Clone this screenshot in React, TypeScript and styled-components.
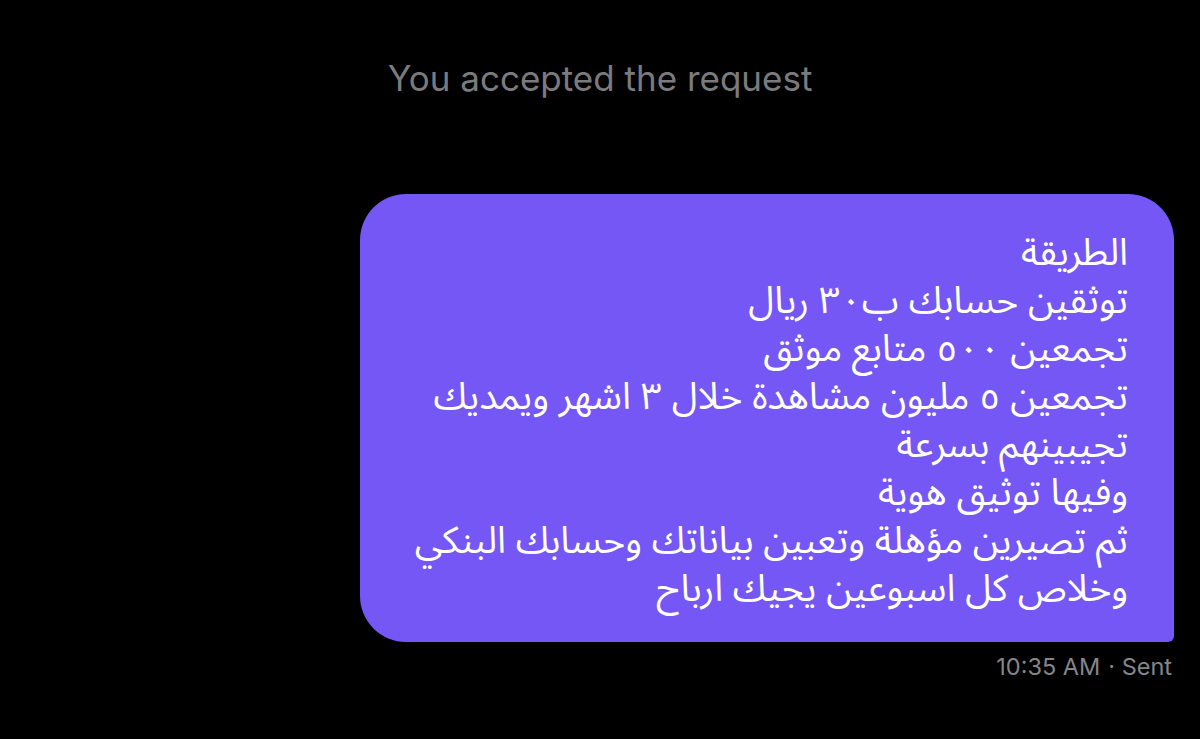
import React from "react";
import styled, { createGlobalStyle } from "styled-components";

const Global = createGlobalStyle`
  html, body { margin: 0; padding: 0; background: #000; }
  * { box-sizing: border-box; }
`;

const Page = styled.div`
  width: 1200px;
  min-height: 739px;
  background: #000;
  display: flex;
  flex-direction: column;
  padding-top: 58px;
  font-family: Inter, "Noto Sans", "Liberation Sans", sans-serif;
`;

const Notice = styled.div`
  text-align: center;
  color: #7b7b7e;
  font-size: 35px;
  line-height: 40px;
`;

const BubbleRow = styled.div`
  display: flex;
  justify-content: flex-end;
  padding-right: 26px;
  margin-top: 96px;
`;

const Bubble = styled.div`
  width: 814px;
  background: #7457f5;
  border-radius: 46px 46px 6px 46px;
  padding: 35px 46px 29px 40px;
  direction: rtl;
  text-align: right;
  color: #fff;
  font-family: "Noto Sans Arabic", "Noto Sans", "DejaVu Sans", sans-serif;
  font-size: 37.5px;
`;

const Line = styled.div`
  height: 48px;
  line-height: 48px;
  white-space: nowrap;
`;

const Meta = styled.div`
  display: flex;
  justify-content: flex-end;
  gap: 8px;
  padding-right: 28px;
  margin-top: 10px;
  color: #86868a;
  font-size: 23.5px;
  line-height: 30px;
`;

const lines = [
  "الطريقة",
  "توثقين حسابك ب٣٠ ريال",
  "تجمعين ٥٠٠ متابع موثق",
  "تجمعين ٥ مليون مشاهدة خلال ٣ اشهر ويمديك",
  "تجيبينهم بسرعة",
  "وفيها توثيق هوية",
  "ثم تصيرين مؤهلة وتعبين بياناتك وحسابك البنكي",
  "وخلاص كل اسبوعين يجيك ارباح",
];

export default function App() {
  return (
    <>
      <Global />
      <Page>
        <Notice>You accepted the request</Notice>
        <BubbleRow>
          <Bubble>
            {lines.map((l, i) => (
              <Line key={i}>{l}</Line>
            ))}
          </Bubble>
        </BubbleRow>
        <Meta>
          <span>10:35 AM</span>
          <span>· Sent</span>
        </Meta>
      </Page>
    </>
  );
}
